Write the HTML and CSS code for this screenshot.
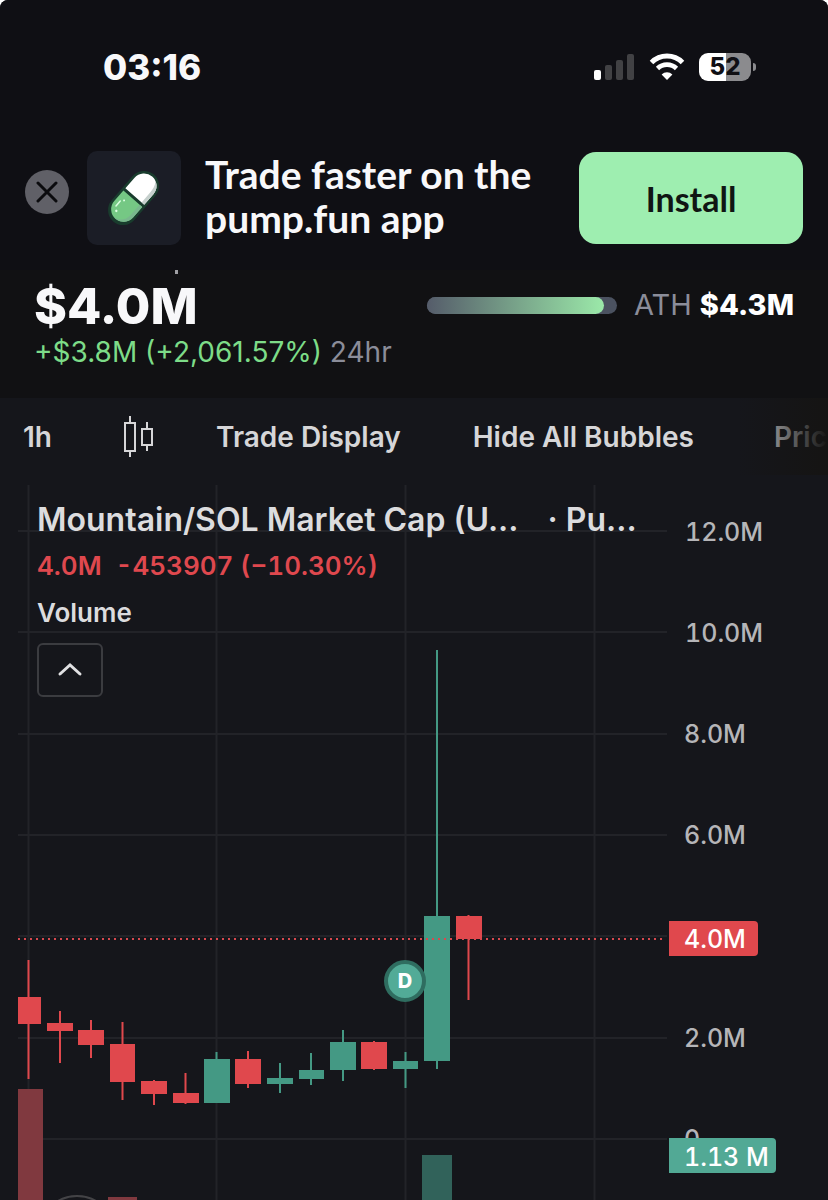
FILE: index.html
```html
<!DOCTYPE html>
<html lang="en">
<head>
    <meta charset="UTF-8">
    <meta name="viewport" content="width=device-width, initial-scale=1.0">
    <title>Mountain/SOL Market Cap</title>
    <link rel="stylesheet" href="styles.css">
</head>
<body>
    <div class="screen">
        <div class="status-bar">
            <span class="clock">03:16</span>
            <div class="status-icons">
                <svg width="42" height="28" viewBox="0 0 42 28" aria-hidden="true">
                    <rect x="1" y="17" width="7" height="10" rx="2" fill="#fff"/>
                    <rect x="12" y="12" width="7" height="15" rx="2" fill="#414144"/>
                    <rect x="23" y="7" width="7" height="20" rx="2" fill="#414144"/>
                    <rect x="34" y="1" width="7" height="26" rx="2" fill="#414144"/>
                </svg>
                <svg class="wifi" width="36" height="28" viewBox="0 0 36 28" aria-hidden="true">
                    <path d="M2.500 9.500a22 22 0 0 1 31 0" fill="none" stroke="#fff" stroke-width="5"/>
                    <path d="M8.500 15.500a13.500 13.500 0 0 1 19 0" fill="none" stroke="#fff" stroke-width="4.600"/>
                    <path d="M18 27l-5.400-5.600a8 8 0 0 1 10.800 0z" fill="#fff"/>
                </svg>
                <div class="battery"><span class="battery-level">52</span></div>
            </div>
        </div>

        <div class="install-banner">
            <button class="close-button" aria-label="Close">
                <svg width="22" height="22" viewBox="0 0 22 22" aria-hidden="true">
                    <path d="M2 2l18 18M20 2L2 20" stroke="#0b0b0e" stroke-width="3" stroke-linecap="round"/>
                </svg>
            </button>
            <div class="app-icon">
                <svg width="94" height="94" viewBox="0 0 94 94" aria-hidden="true">
                    <g transform="translate(46.500 47) rotate(41)">
                        <rect x="-15" y="-31" width="30" height="62" rx="15" fill="#193c2d"/>
                        <path d="M-12.500-2v-14a12.500 12.500 0 0 1 25 0v14z" fill="#fff"/>
                        <path d="M12.500-2v-14a12.500 12.500 0 0 0-7-11.200c3 4 3.500 8 3.500 12.200v13z" fill="#c6d0cd"/>
                        <path d="M-12.500 1v14a12.500 12.500 0 0 0 25 0v-14z" fill="#75c884"/>
                        <path d="M12.500 1v14a12.500 12.500 0 0 1-15 12.200c7-1 11-5 11.500-12.200v-14z" fill="#79b78d"/>
                        <path d="M-8 11v6.500" stroke="#dcffe2" stroke-width="1.500" stroke-linecap="round"/>
                        <circle cx="-5.500" cy="8" r="1" fill="#dcffe2"/>
                        <circle cx="-4.500" cy="21" r="1.200" fill="#dcffe2"/>
                    </g>
                </svg>
            </div>
            <p class="banner-text">Trade faster on the pump.fun app</p>
            <button class="install-button">Install</button>
        </div>

        <header class="market">
            <div class="clipped-dot"></div>
            <div class="market-row">
                <h1 class="market-cap">$4.0M</h1>
                <div class="ath">
                    <div class="ath-bar"><div class="ath-fill" style="width: 93%"></div></div>
                    <span>ATH <strong>$4.3M</strong></span>
                </div>
            </div>
            <p class="change">+$3.8M (+2,061.57%) <span class="period">24hr</span></p>
        </header>

        <nav class="toolbar">
            <button class="tool">1h</button>
            <button class="tool tool-candles" aria-label="Chart type">
                <svg width="30" height="42" viewBox="0 0 30 42" fill="none" stroke="#d6d6d8" stroke-width="2" aria-hidden="true">
                    <path d="M6 0v7M6 35v6M23 6v7M23 29v6"/>
                    <rect x="1" y="7" width="10" height="28"/>
                    <rect x="18" y="13" width="10" height="16"/>
                </svg>
            </button>
            <button class="tool">Trade Display</button>
            <button class="tool">Hide All Bubbles</button>
            <button class="tool">Price</button>
        </nav>

        <main class="chart">
            <svg class="plot" viewBox="0 0 828 725" role="img" aria-label="Mountain/SOL market cap, 1h candles">
                <g class="grid">
                    <path d="M28.500 10v715M216.500 10v715M405.500 10v715M594.500 10v715"/>
                    <path d="M18 56h649M18 157h649M18 259h649M18 360h649M18 461h649M18 563h649M18 664h649"/>
                </g>

                <!-- volume -->
                <rect x="18" y="614" width="25" height="111" fill="#80393f"/>
                <rect x="108" y="722" width="29" height="3" fill="#80393f"/>
                <rect x="422" y="680" width="30" height="45" fill="#31625a"/>
                <circle cx="77" cy="759" r="38" fill="none" stroke="#434346" stroke-width="2"/>

                <!-- candles -->
                <g class="down">
                    <path d="M28.500 485v119M60 536v52M91 545v38M122.500 547v78M154 605v25M185.500 598v31M248 576v37M374 566v29M468.500 440v85"/>
                    <rect x="18" y="522" width="23" height="27"/>
                    <rect x="47" y="548" width="26" height="8"/>
                    <rect x="78" y="555" width="26" height="15"/>
                    <rect x="110" y="569" width="25" height="38"/>
                    <rect x="141" y="606" width="26" height="13"/>
                    <rect x="173" y="618" width="26" height="10"/>
                    <rect x="235" y="584" width="26" height="25"/>
                    <rect x="361" y="567" width="26" height="27"/>
                    <rect x="456" y="441" width="26" height="23"/>
                </g>
                <g class="up">
                    <path d="M216.500 577v51M280 588v30M311 578v32M343 555v51M405.500 577v36M437 175v419"/>
                    <rect x="204" y="584" width="26" height="44"/>
                    <rect x="267" y="603" width="26" height="6"/>
                    <rect x="299" y="595" width="25" height="9"/>
                    <rect x="330" y="567" width="26" height="28"/>
                    <rect x="393" y="586" width="25" height="8"/>
                    <rect x="424" y="441" width="26" height="145"/>
                </g>

                <path class="last-price" d="M18 464h648"/>

                <circle cx="405" cy="506" r="19" fill="#52ab97" stroke="#2f6d60" stroke-width="4"/>
                <text class="bubble" x="405" y="513">D</text>

                <g class="axis">
                    <text x="685" y="66">12.0M</text>
                    <text x="685" y="167">10.0M</text>
                    <text x="684" y="268">8.0M</text>
                    <text x="684" y="369">6.0M</text>
                    <text x="684" y="572">2.0M</text>
                    <text x="684" y="673">0</text>
                </g>
                <path d="M669 446h85a4 4 0 0 1 4 4v27a4 4 0 0 1-4 4h-85z" fill="#e0484d"/>
                <path d="M669 663h103a4 4 0 0 1 4 4v27a4 4 0 0 1-4 4h-103z" fill="#52a995"/>
                <g class="axis axis-tag">
                    <text x="684" y="473">4.0M</text>
                    <text x="684" y="691">1.13 M</text>
                </g>
            </svg>

            <div class="legend">
                <div class="legend-title">
                    <span>Mountain/SOL Market Cap (U...</span>
                    <span>· Pu...</span>
                </div>
                <div class="legend-values"><span>4.0M</span><span>-453907 (−10.30%)</span></div>
                <div class="legend-volume">Volume</div>
                <button class="collapse" aria-label="Hide indicators">
                    <svg width="26" height="16" viewBox="0 0 26 16" aria-hidden="true">
                        <path d="M3 12L13 3l10 9" fill="none" stroke="#e0e0e2" stroke-width="3" stroke-linecap="round"/>
                    </svg>
                </button>
            </div>
        </main>
    </div>
</body>
</html>
```
FILE: styles.css
```css
* {
    box-sizing: border-box;
}
body {
    margin: 0;
    background-color: #fff;
    font-family: Inter, "Liberation Sans", sans-serif;
    color: #f8f8fa;
}
h1, p {
    margin: 0;
}
button {
    border: none;
    padding: 0;
    background: none;
    font-family: inherit;
    color: inherit;
    cursor: pointer;
}
svg {
    display: block;
}
.screen {
    overflow: hidden;
    border-radius: 8px 8px 0 0;
    background-color: #15161b;
}

/* phone status bar */
.status-bar {
    display: flex;
    align-items: center;
    justify-content: space-between;
    height: 134px;
    padding: 0 77px 0 103px;
    background-color: #0f0f14;
}
.clock {
    font-size: 35px;
    font-weight: 800;
}
.status-icons {
    display: flex;
    align-items: center;
}
.wifi {
    margin: 0 14px;
}
.battery {
    position: relative;
    width: 52px;
    height: 28px;
    border-radius: 9px;
    background: linear-gradient(90deg, #fff 52%, #8b8b8e 52%);
    color: #0f0f14;
    text-align: center;
}
.battery::after {
    content: "";
    position: absolute;
    right: -5px;
    top: 10px;
    width: 3px;
    height: 8px;
    border-radius: 0 4px 4px 0;
    background-color: #8b8b8e;
}
.battery-level {
    font-size: 24px;
    line-height: 28px;
    font-weight: 800;
}

/* install banner */
.install-banner {
    display: flex;
    align-items: center;
    height: 136px;
    padding: 0 25px 8px;
    background-color: #0f0f14;
}
.close-button {
    display: flex;
    align-items: center;
    justify-content: center;
    width: 44px;
    height: 44px;
    margin: 0 18px 12px 0;
    border-radius: 50%;
    background-color: #606067;
}
.app-icon {
    margin-right: 24px;
    border-radius: 10px;
    background-color: #1b1d26;
}
.banner-text {
    flex: 1;
    padding-bottom: 4px;
    font-family: Lato, sans-serif;
    font-size: 39px;
    line-height: 44px;
    font-weight: 700;
}
.install-button {
    width: 224px;
    height: 92px;
    border-radius: 17px;
    background-color: #9eeeb0;
    font-family: Lato, sans-serif;
    font-size: 34px;
    font-weight: 700;
    color: #101513;
}

/* market cap */
.market {
    height: 128px;
    padding: 0 34px;
    background-color: #111113;
}
.clipped-dot {
    width: 3px;
    height: 4px;
    margin-left: 141px;
    background-color: #a0a0a4;
}
.market-row {
    display: flex;
    justify-content: space-between;
    align-items: center;
    height: 64px;
}
.market-cap {
    font-size: 50px;
    font-weight: 800;
}
.ath {
    display: flex;
    align-items: center;
    gap: 17px;
    font-size: 29px;
    line-height: 32px;
    padding-bottom: 2px;
    color: #8b8d99;
}
.ath strong {
    font-weight: 800;
    color: #fff;
}
.ath-bar {
    width: 190px;
    height: 17px;
    border-radius: 9px;
    background-color: #4b5260;
}
.ath-fill {
    height: 17px;
    border-radius: 9px;
    background: linear-gradient(90deg, #555c6a, #9be9a9);
}
.change {
    font-size: 28px;
    line-height: 28px;
    color: #7ddc88;
}
.period {
    color: #8b8d99;
}

/* chart toolbar */
.toolbar {
    position: relative;
    display: flex;
    align-items: center;
    gap: 72px;
    height: 77px;
    padding-left: 23px;
    overflow: hidden;
}
.toolbar::after {
    content: "";
    position: absolute;
    right: 0;
    top: 0;
    width: 90px;
    height: 100%;
    background: linear-gradient(90deg, rgba(21, 20, 19, 0), #151413);
}
.tool {
    flex-shrink: 0;
    font-size: 28px;
    font-weight: 600;
    color: #d6d6d8;
}
.tool:last-child {
    margin-left: 8px;
}
.tool-candles {
    margin-right: -10px;
}

/* chart */
.chart {
    position: relative;
}
.plot {
    width: 100%;
    height: auto;
}
.grid {
    fill: none;
    stroke: #222328;
    stroke-width: 2;
}
.down {
    fill: #e0484d;
    stroke: none;
}
.up {
    fill: #449984;
    stroke: none;
}
.down path {
    stroke: #e0484d;
    stroke-width: 2;
}
.up path {
    stroke: #449984;
    stroke-width: 2;
}
.last-price {
    stroke: #d8494f;
    stroke-width: 2;
    stroke-dasharray: 2 4;
}
.bubble {
    font-size: 20px;
    font-weight: 800;
    fill: #fff;
    text-anchor: middle;
}
.axis {
    font-size: 25px;
    font-weight: 500;
    font-variant-numeric: tabular-nums;
    fill: #b5b5b8;
}
.axis-tag {
    fill: #fff;
}
.legend {
    position: absolute;
    top: 24px;
    left: 37px;
    color: #dcdcde;
    font-weight: 600;
}
.legend-title {
    display: flex;
    gap: 29px;
    font-size: 32px;
    line-height: 42px;
}
.legend-values {
    display: flex;
    gap: 14px;
    font-size: 26px;
    font-variant-numeric: tabular-nums;
    line-height: 50px;
    color: #df484e;
}
.legend-volume {
    font-size: 26px;
    line-height: 44px;
}
.collapse {
    display: flex;
    align-items: center;
    justify-content: center;
    width: 66px;
    height: 54px;
    margin-top: 8px;
    border: 2px solid #3b3c40;
    border-radius: 6px;
}
```
